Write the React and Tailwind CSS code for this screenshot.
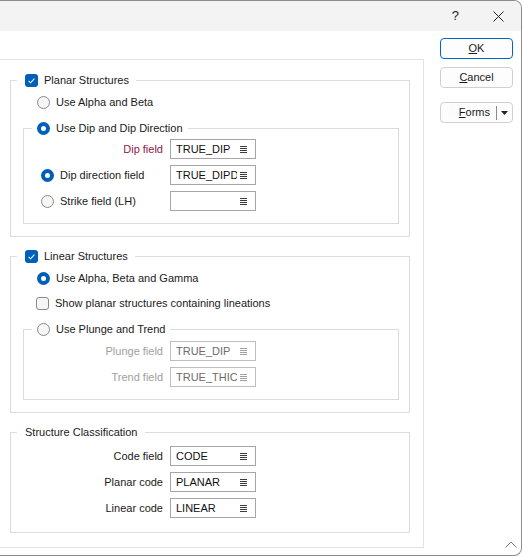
import React from 'react';

const FONT = { fontFamily: '"Liberation Sans", Arial, sans-serif' };

function Radio({ checked }) {
  if (checked) {
    return (
      <span className="w-[13px] h-[13px] rounded-full bg-[#005fb8] flex items-center justify-center shrink-0">
        <span className="w-[5px] h-[5px] rounded-full bg-white" />
      </span>
    );
  }
  return <span className="w-[13px] h-[13px] rounded-full border border-[#8a8a8a] bg-[#f6f6f6] shrink-0" />;
}

function Check({ checked }) {
  if (!checked) {
    return <span className="w-[13px] h-[13px] rounded-[3px] border border-[#8a8a8a] bg-[#f6f6f6] shrink-0" />;
  }
  return (
    <span className="w-[13px] h-[13px] rounded-[3px] bg-[#005fb8] flex items-center justify-center shrink-0">
      <svg width="13" height="13" viewBox="0 0 13 13">
        <path d="M3.6 6.9 L5.6 8.8 L9.4 4.6" fill="none" stroke="white" strokeWidth="1.1" />
      </svg>
    </span>
  );
}

function ListIcon({ color }) {
  return (
    <svg width="7" height="8" viewBox="0 0 7 8" className="shrink-0">
      <path d="M0 1.5H7M0 3.5H7M0 5.5H7M0 7.5H7" stroke={color} strokeWidth="1" />
    </svg>
  );
}

function Field({ value, disabled }) {
  return (
    <div
      className={
        'w-[86px] h-5 border bg-white flex items-center pl-[5px] pr-[8px] gap-[3px] ' +
        (disabled ? 'border-[#bdbdbd] text-[#6b6b6b]' : 'border-[#a6a6a6] text-[#111]')
      }
    >
      <span className="flex-1 overflow-hidden whitespace-nowrap leading-4">{value}</span>
      <ListIcon color={disabled ? '#a0a0a0' : '#3c3c3c'} />
    </div>
  );
}

function Button({ children, primary }) {
  return (
    <button
      className={
        'w-[73px] h-[21px] rounded-[4px] border bg-[#fdfdfd] text-[11px] text-[#1a1a1a] flex items-center justify-center ' +
        (primary ? 'border-[#0067c0]' : 'border-[#d0d0d0]')
      }
    >
      {children}
    </button>
  );
}

export default function App() {
  return (
    <div className="bg-white w-[523px] h-[557px] text-[11px] text-[#1a1a1a]" style={FONT}>
      <div className="relative w-[522px] h-[556px] border-t border-r border-b border-[#8c8c8c] rounded-tr-[8px] rounded-br-[8px] bg-white overflow-hidden">
        {/* title bar */}
        <div className="h-[30px] bg-[#f3f3f3] flex items-center justify-end">
          <span className="text-[13px] text-[#222] mr-[34px]" style={{ fontFamily: '"Liberation Sans", Arial, sans-serif' }}>?</span>
          <svg width="11" height="11" viewBox="0 0 11 11" className="mr-[17px]">
            <path d="M0.5 0.5 L10.5 10.5 M10.5 0.5 L0.5 10.5" stroke="#222" strokeWidth="1" />
          </svg>
        </div>

        <div className="flex">
          {/* main panel */}
          <div className="mt-[28px] w-[424px] border-t border-r border-b border-[#e3e3e3] pt-[12px] pb-[14px]">
            {/* Planar Structures */}
            <fieldset className="ml-[10px] mr-[13px] border border-[#dcdcdc] pb-[12px]">
              <legend className="ml-[6px] pl-[8px] pr-[7px]">
                <span className="h-4 flex items-center gap-[6px] leading-4">
                  <Check checked />
                  Planar Structures
                </span>
              </legend>
              <div className="mt-[6px] h-4 pl-[26px] flex items-center gap-[6px] leading-4">
                <Radio />
                Use Alpha and Beta
              </div>
              <fieldset className="mt-[10px] ml-[12px] mr-[10px] border border-[#dcdcdc] pb-[12px]">
                <legend className="ml-[8px] px-[5px]">
                  <span className="h-4 flex items-center gap-[6px] leading-4">
                    <Radio checked />
                    Use Dip and Dip Direction
                  </span>
                </legend>
                <div className="mt-[3px] flex items-center">
                  <span className="w-[146px] pr-[7px] text-right text-[#8e1a47]">Dip field</span>
                  <Field value="TRUE_DIP" />
                </div>
                <div className="mt-[6px] flex items-center">
                  <span className="w-[146px] pl-[17px] flex items-center gap-[6px]">
                    <Radio checked />
                    Dip direction field
                  </span>
                  <Field value="TRUE_DIPDIRECTION" />
                </div>
                <div className="mt-[6px] flex items-center">
                  <span className="w-[146px] pl-[17px] flex items-center gap-[6px]">
                    <Radio />
                    Strike field (LH)
                  </span>
                  <Field value="" />
                </div>
              </fieldset>
            </fieldset>

            {/* Linear Structures */}
            <fieldset className="mt-[11px] ml-[10px] mr-[13px] border border-[#dcdcdc] pb-[12px]">
              <legend className="ml-[6px] pl-[8px] pr-[7px]">
                <span className="h-4 flex items-center gap-[6px] leading-4">
                  <Check checked />
                  Linear Structures
                </span>
              </legend>
              <div className="mt-[6px] h-4 pl-[26px] flex items-center gap-[6px] leading-4">
                <Radio checked />
                Use Alpha, Beta and Gamma
              </div>
              <div className="mt-[9px] h-4 pl-[25px] flex items-center gap-[6px] leading-4">
                <Check />
                Show planar structures containing lineations
              </div>
              <fieldset className="mt-[10px] ml-[12px] mr-[10px] border border-[#dcdcdc] pb-[12px]">
                <legend className="ml-[8px] px-[5px]">
                  <span className="h-4 flex items-center gap-[6px] leading-4">
                    <Radio />
                    Use Plunge and Trend
                  </span>
                </legend>
                <div className="mt-[4px] flex items-center">
                  <span className="w-[146px] pr-[7px] text-right text-[#a0a0a0]">Plunge field</span>
                  <Field value="TRUE_DIP" disabled />
                </div>
                <div className="mt-[6px] flex items-center">
                  <span className="w-[146px] pr-[7px] text-right text-[#a0a0a0]">Trend field</span>
                  <Field value="TRUE_THICKNESS" disabled />
                </div>
              </fieldset>
            </fieldset>

            {/* Structure Classification */}
            <fieldset className="mt-[11px] ml-[10px] mr-[13px] border border-[#dcdcdc] pb-[14px]">
              <legend className="ml-[6px] pl-[8px] pr-[7px]">
                <span className="h-4 flex items-center leading-4">Structure Classification</span>
              </legend>
              {[
                ['Code field', 'CODE'],
                ['Planar code', 'PLANAR'],
                ['Linear code', 'LINEAR'],
              ].map(([label, value]) => (
                <div key={label} className="mt-[6px] flex items-center">
                  <span className="w-[159px] pr-[7px] text-right">{label}</span>
                  <Field value={value} />
                </div>
              ))}
            </fieldset>
          </div>

          {/* buttons */}
          <div className="ml-[16px] mt-[7px] flex flex-col">
            <Button primary>
              <span><span className="underline">O</span>K</span>
            </Button>
            <div className="mt-[8px]">
              <Button>
                <span><span className="underline">C</span>ancel</span>
              </Button>
            </div>
            <div className="mt-[14px]">
              <button className="w-[73px] h-[21px] rounded-[4px] border border-[#d0d0d0] bg-[#fdfdfd] text-[11px] text-[#1a1a1a] flex items-center">
                <span className="flex-1 text-right pr-[6px]"><span className="underline">F</span>orms</span>
                <span className="w-px h-[14px] bg-[#8a8a8a]" />
                <span className="w-[15px] flex justify-center">
                  <svg width="7" height="4" viewBox="0 0 7 4">
                    <path d="M0 0 H7 L3.5 4 Z" fill="#222" />
                  </svg>
                </span>
              </button>
            </div>
          </div>
        </div>

        {/* resize grip */}
        <svg width="12" height="7" viewBox="0 0 12 7" className="absolute right-[4px] bottom-[7px]">
          <path d="M0.5 6.5 L6 1 L11.5 6.5" fill="none" stroke="#7a7a7a" strokeWidth="1" />
        </svg>
      </div>
    </div>
  );
}
